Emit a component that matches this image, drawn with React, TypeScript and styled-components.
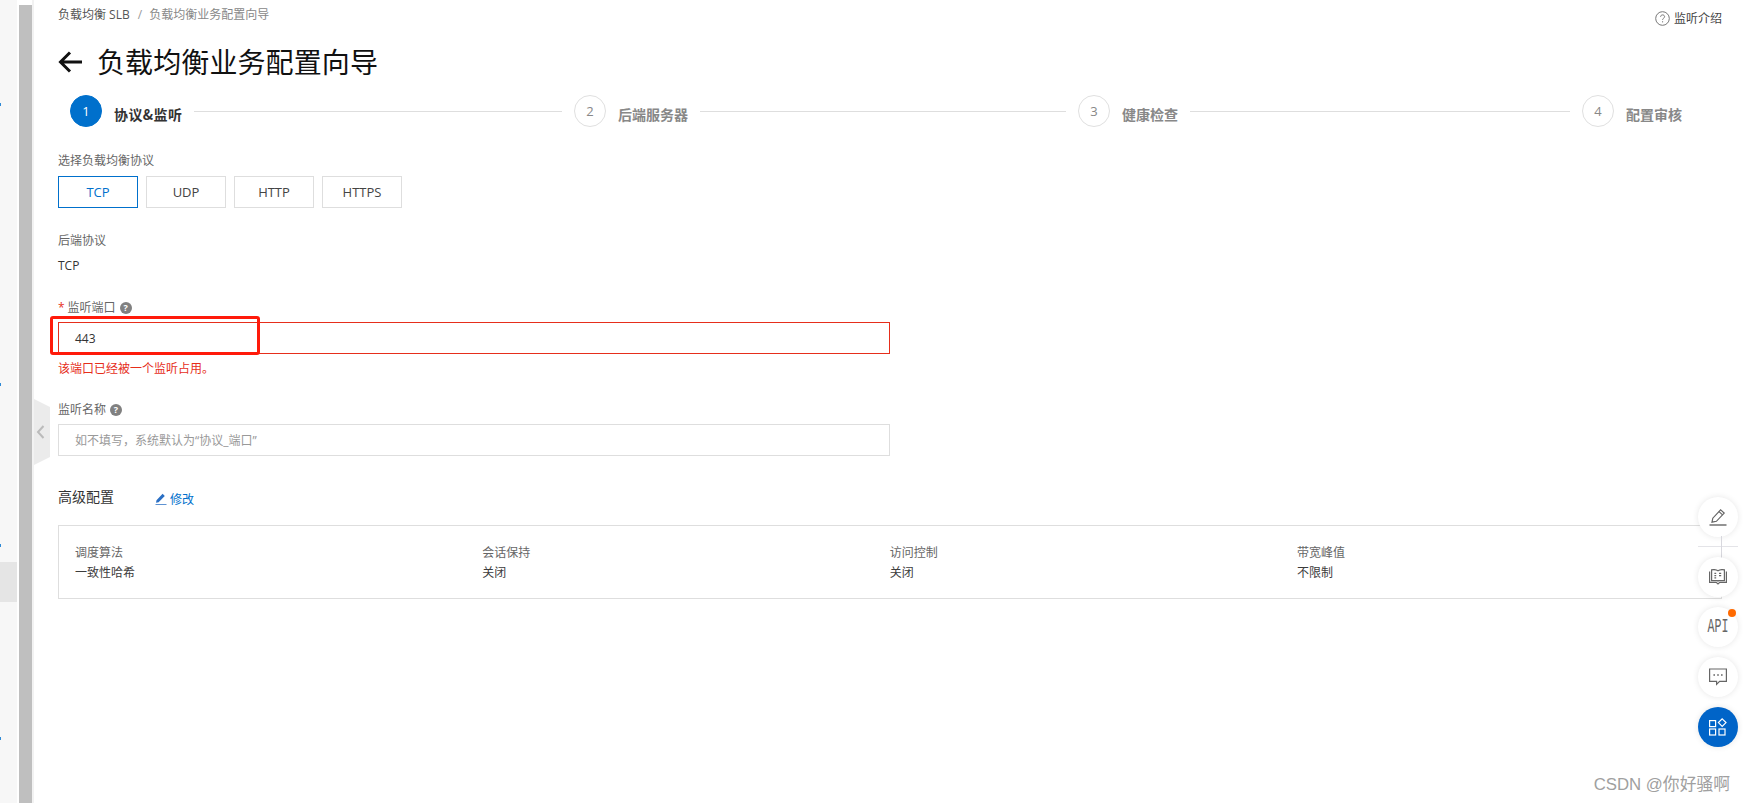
import React from "react";
import styled, { createGlobalStyle } from "styled-components";

const Global = createGlobalStyle`
  html, body { margin: 0; padding: 0; background: #fff; }
  body {
    font-family: "Open Sans", "Noto Sans CJK SC", sans-serif;
    font-size: 12px;
    color: #333;
    overflow: hidden;
  }
  * { box-sizing: border-box; }
`;

const Page = styled.div`
  position: relative;
  display: flex;
  width: 1746px;
  height: 803px;
  overflow: hidden;
`;
const Sidebar = styled.aside`
  display: flex;
  flex-direction: column;
  width: 17px;
  background: #f7f7f7;
`;
const SideMark = styled.i<{ $gap: number }>`
  display: block;
  width: 1px;
  height: 3px;
  margin-top: ${(p) => p.$gap}px;
  background: #2f8ad6;
`;
const SideRow = styled.div<{ $gap: number }>`
  height: 40px;
  margin-top: ${(p) => p.$gap}px;
  background: #e5e5e5;
`;
const Rail = styled.div`
  width: 13px;
  margin: 5px 0 0 2px;
  background: #bfbfbf;
`;
const RailEdge = styled.div`
  width: 2px;
  background: #f2f2f2;
`;
const Main = styled.main`
  flex: 1;
  min-width: 0;
  padding: 5px 24px 0;
`;
const TopBar = styled.div`
  display: flex;
  justify-content: space-between;
  height: 20px;
`;
const Crumbs = styled.div`
  display: flex;
  align-items: center;
  height: 20px;
  color: #555;
  line-height: 20px;
`;
const CrumbSep = styled.span`
  margin: 0 7px 0 8px;
  color: #999;
`;
const CrumbNow = styled.span`
  color: #888;
`;
const HelpLink = styled.div`
  display: flex;
  align-items: center;
  gap: 4px;
  height: 20px;
  margin-top: 3px;
  color: #444;
`;
const TitleRow = styled.div`
  display: flex;
  align-items: center;
  gap: 15px;
  height: 40px;
  margin-top: 17px;
`;
const Title = styled.h1`
  margin: 0;
  font-size: 28px;
  font-weight: 400;
  line-height: 40px;
  letter-spacing: 0.1px;
  color: #111;
`;
const Steps = styled.div`
  display: flex;
  margin: 13px 0 0 12px;
`;
const Step = styled.div<{ $last?: boolean }>`
  display: flex;
  align-items: center;
  width: ${(p) => (p.$last ? "auto" : "504px")};
  height: 32px;
`;
const StepDot = styled.div<{ $on?: boolean }>`
  display: flex;
  flex: none;
  align-items: center;
  justify-content: center;
  width: 32px;
  height: 32px;
  border-radius: 50%;
  border: 1px solid ${(p) => (p.$on ? "#0070cc" : "#e0e0e0")};
  background: ${(p) => (p.$on ? "#0070cc" : "#fff")};
  color: ${(p) => (p.$on ? "#fff" : "#888")};
  font-size: 13px;
`;
const StepName = styled.span<{ $on?: boolean }>`
  flex: none;
  margin: 6px 0 0 12px;
  font-family: "Noto Sans CJK SC", sans-serif;
  font-size: 14px;
  font-weight: 700;
  line-height: 20px;
  letter-spacing: ${(p) => (p.$on ? "0.4px" : "0")};
  color: ${(p) => (p.$on ? "#333" : "#888")};
`;
const StepLine = styled.span`
  flex: 1;
  height: 1px;
  margin: 0 12px;
  background: #dedede;
`;
const Label = styled.div<{ $gap: number }>`
  display: flex;
  align-items: center;
  height: 18px;
  margin-top: ${(p) => p.$gap}px;
  padding-top: 2px;
  line-height: 18px;
  color: #666;
`;
const Required = styled.span`
  margin-right: 3px;
  color: #e62e1b;
`;
const HintBadge = styled.span`
  display: inline-flex;
  align-items: center;
  justify-content: center;
  width: 12px;
  height: 12px;
  margin-left: 4px;
  border-radius: 50%;
  background: #808080;
  color: #fff;
  font-size: 9px;
  font-weight: 700;
  line-height: 12px;
`;
const Protocols = styled.div`
  display: flex;
  gap: 8px;
  margin-top: 7px;
`;
const Protocol = styled.button<{ $on?: boolean }>`
  width: 80px;
  height: 32px;
  padding: 0;
  border: 1px solid ${(p) => (p.$on ? "#0070cc" : "#dedede")};
  background: #fff;
  color: ${(p) => (p.$on ? "#0070cc" : "#444")};
  font: inherit;
  font-size: 13px;
`;
const Value = styled.div`
  height: 18px;
  margin-top: 7px;
  padding-top: 1px;
  line-height: 18px;
  color: #333;
`;
const InputWrap = styled.div`
  position: relative;
  width: 832px;
  margin-top: 6px;
`;
const Input = styled.div<{ $error?: boolean; $ghost?: boolean }>`
  height: 32px;
  padding: 1px 16px 0;
  border: 1px solid ${(p) => (p.$error ? "#e62e1b" : "#dedede")};
  line-height: 30px;
  color: ${(p) => (p.$ghost ? "#999" : "#333")};
`;
const Callout = styled.div`
  position: absolute;
  top: -6px;
  left: -8px;
  width: 210px;
  height: 39px;
  border: 3px solid #ff1a0a;
  border-radius: 3px;
  pointer-events: none;
`;
const ErrorText = styled.div`
  height: 18px;
  margin-top: 5px;
  padding-top: 1px;
  line-height: 18px;
  color: #e62e1b;
`;
const AdvancedHead = styled.div`
  display: flex;
  align-items: center;
  height: 18px;
  margin-top: 32px;
`;
const AdvancedTitle = styled.span`
  width: 97px;
  font-size: 14px;
  line-height: 18px;
  color: #333;
`;
const EditLink = styled.span`
  display: flex;
  align-items: center;
  gap: 3px;
  margin: 4px 0 0 0;
  color: #0070cc;
`;
const Summary = styled.div`
  display: grid;
  grid-template-columns: repeat(4, 407.33px);
  height: 74px;
  margin-top: 19px;
  padding: 17px 16px 0;
  border: 1px solid #dedede;
`;
const SummaryKey = styled.div`
  height: 20px;
  line-height: 20px;
  color: #666;
`;
const SummaryValue = styled.div`
  height: 20px;
  line-height: 20px;
  color: #3c3c3c;
`;
const Handle = styled.svg`
  position: absolute;
  top: 399px;
  left: 34px;
`;
const Dock = styled.div`
  position: absolute;
  top: 497px;
  right: 8px;
  display: flex;
  flex-direction: column;
  width: 40px;
`;
const DockLink = styled.span`
  position: absolute;
  top: 39px;
  left: 23px;
  width: 1px;
  height: 22px;
  background: #d8d8de;
`;
const DockCross = styled.span`
  position: absolute;
  top: 49px;
  left: 0;
  width: 40px;
  height: 1px;
  background: #e4e4e8;
`;
const DockButton = styled.div<{ $gap?: number; $primary?: boolean }>`
  position: relative;
  display: flex;
  align-items: center;
  justify-content: center;
  width: 40px;
  height: 40px;
  margin-top: ${(p) => p.$gap ?? 10}px;
  border-radius: 50%;
  background: ${(p) => (p.$primary ? "#0064c8" : "#fff")};
  box-shadow: 0 0 6px rgba(0, 0, 0, 0.1);
  color: #666;
`;
const ApiText = styled.span`
  display: block;
  font-family: "Liberation Mono", monospace;
  font-size: 20px;
  line-height: 18px;
  transform: scaleX(0.58);
  color: #666;
`;
const Badge = styled.span`
  position: absolute;
  top: 2px;
  right: 2px;
  width: 8px;
  height: 8px;
  border-radius: 50%;
  background: #ff6a00;
`;
const Watermark = styled.div`
  position: absolute;
  right: 16px;
  bottom: 7px;
  font-family: "Liberation Sans", "Noto Sans CJK SC", sans-serif;
  font-size: 16.8px;
  line-height: 22px;
  color: #a0a0a0;
`;

const BackArrow = () => (
  <svg width="24" height="24" viewBox="0 0 24 24" fill="none" stroke="#111" strokeWidth="3">
    <path d="M2 12H24M12 2.500 2.500 12l9.500 9.500" />
  </svg>
);
const HelpIcon = () => (
  <svg width="15" height="15" viewBox="0 0 15 15" fill="none" stroke="#777">
    <circle cx="7.5" cy="7.5" r="6.8" />
    <path d="M5.6 5.8c0-1.2.9-1.9 2-1.9s2 .7 2 1.8c0 1.5-2 1.5-2 3.1" />
    <path d="M7.6 10.2v1.2" />
  </svg>
);
const PenSmall = () => (
  <svg width="12" height="12" viewBox="0 0 12 12" fill="#2a6fc4">
    <path d="M0.5 11.2h11v.8H.5zM1 9.8l.5-2.6L7.6.8l2.2 2.1-6.2 6.3z" />
  </svg>
);
const PenIcon = () => (
  <svg width="18" height="18" viewBox="0 0 18 18" fill="none" stroke="#666" strokeWidth="1.2">
    <path d="M.5 17H17.5" strokeWidth="1.4" />
    <path d="M3 14.2l.8-4L11.6 1.8l3.6 3.3-7.8 8.2z" />
    <path d="M10 3.6l3.6 3.3" />
  </svg>
);
const BookIcon = () => (
  <svg width="18" height="16" viewBox="0 0 18 16" fill="none" stroke="#666" strokeWidth="1.2">
    <path d="M.6 2.6v10.8h6.6l1.8 1.6 1.8-1.6h6.6V2.6" />
    <path d="M2.6.8C4.8.4 7.4.6 9 1.8c1.6-1.2 4.2-1.4 6.4-1v10.8H9.6L9 12.2l-.6-.6H2.600z" />
    <path d="M5.4 4.4h1.8M5.4 6.6h1.8M5.4 8.8h1.8M10 4.4h2.2M10 6.6h2.2" />
  </svg>
);
const ChatIcon = () => (
  <svg width="18" height="18" viewBox="0 0 18 18" fill="none" stroke="#666" strokeWidth="1.2">
    <path d="M.6 1h16.8v12.4h-6.8L7.6 16.4v-3H.6z" />
    <path d="M4.4 7h1.6M8.2 7h1.6M12 7h1.6" strokeWidth="1.6" />
  </svg>
);
const AppsIcon = () => (
  <svg width="18" height="18" viewBox="0 0 18 18" fill="none" stroke="#fff" strokeWidth="1.2">
    <rect x=".6" y="2.6" width="6" height="6" />
    <rect x=".6" y="11" width="6" height="6" />
    <rect x="10" y="11" width="6" height="6" />
    <path d="M13.2.8l3.8 3.8-3.8 3.8-3.8-3.8z" />
  </svg>
);

const stepList = ["协议&监听", "后端服务器", "健康检查", "配置审核"];
const summary = [
  ["调度算法", "一致性哈希"],
  ["会话保持", "关闭"],
  ["访问控制", "关闭"],
  ["带宽峰值", "不限制"],
];

export default function App() {
  return (
    <Page>
      <Global />
      <Sidebar>
        <SideMark $gap={103} />
        <SideMark $gap={277} />
        <SideMark $gap={158} />
        <SideRow $gap={15} />
        <SideMark $gap={135} />
      </Sidebar>
      <Rail />
      <RailEdge />
      <Main>
        <TopBar>
          <Crumbs>
            负载均衡 SLB<CrumbSep>/</CrumbSep>
            <CrumbNow>负载均衡业务配置向导</CrumbNow>
          </Crumbs>
          <HelpLink>
            <HelpIcon />
            监听介绍
          </HelpLink>
        </TopBar>
        <TitleRow>
          <BackArrow />
          <Title>负载均衡业务配置向导</Title>
        </TitleRow>
        <Steps>
          {stepList.map((name, i) => (
            <Step key={name} $last={i === 3}>
              <StepDot $on={i === 0}>{i + 1}</StepDot>
              <StepName $on={i === 0}>{name}</StepName>
              {i < 3 && <StepLine />}
            </Step>
          ))}
        </Steps>
        <Label $gap={24}>选择负载均衡协议</Label>
        <Protocols>
          <Protocol $on>TCP</Protocol>
          <Protocol>UDP</Protocol>
          <Protocol>HTTP</Protocol>
          <Protocol>HTTPS</Protocol>
        </Protocols>
        <Label $gap={23}>后端协议</Label>
        <Value>TCP</Value>
        <Label $gap={24}>
          <Required>*</Required>监听端口<HintBadge>?</HintBadge>
        </Label>
        <InputWrap>
          <Input $error>443</Input>
          <Callout />
        </InputWrap>
        <ErrorText>该端口已经被一个监听占用。</ErrorText>
        <Label $gap={23}>
          监听名称<HintBadge>?</HintBadge>
        </Label>
        <InputWrap>
          <Input $ghost>如不填写，系统默认为“协议_端口”</Input>
        </InputWrap>
        <AdvancedHead>
          <AdvancedTitle>高级配置</AdvancedTitle>
          <EditLink>
            <PenSmall />
            修改
          </EditLink>
        </AdvancedHead>
        <Summary>
          {summary.map(([k, v]) => (
            <div key={k}>
              <SummaryKey>{k}</SummaryKey>
              <SummaryValue>{v}</SummaryValue>
            </div>
          ))}
        </Summary>
      </Main>
      <Handle width="16" height="66" viewBox="0 0 16 66">
        <path d="M0 0l16 8v50L0 66z" fill="#ebebeb" />
        <path d="M9.500 27l-5.500 6 5.500 6" fill="none" stroke="#bbb" strokeWidth="2" />
      </Handle>
      <Dock>
        <DockButton $gap={0}>
          <PenIcon />
        </DockButton>
        <DockCross />
        <DockLink />
        <DockButton $gap={20}>
          <BookIcon />
        </DockButton>
        <DockButton>
          <ApiText>API</ApiText>
          <Badge />
        </DockButton>
        <DockButton>
          <ChatIcon />
        </DockButton>
        <DockButton $primary>
          <AppsIcon />
        </DockButton>
      </Dock>
      <Watermark>CSDN @你好骚啊</Watermark>
    </Page>
  );
}
